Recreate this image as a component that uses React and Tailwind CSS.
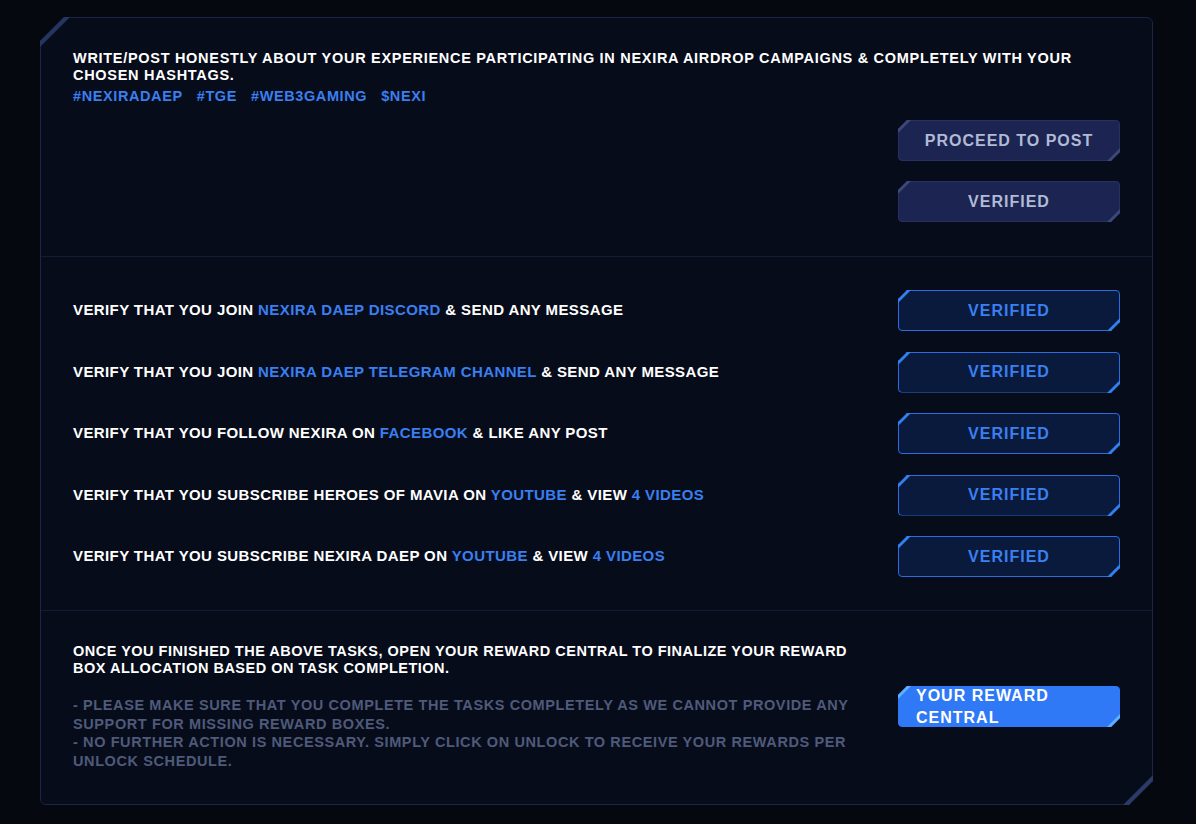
import clsx from "clsx";

const tasks = [
  { before: "Verify that you join ", link: "Nexira DAEP Discord", after: " & send any message" },
  { before: "Verify that you join ", link: "Nexira DAEP Telegram Channel", after: " & send any message" },
  { before: "Verify that you follow Nexira on ", link: "Facebook", after: " & like any post" },
  { before: "Verify that you subscribe Heroes of Mavia on ", link: "Youtube", after: " & view ", extra: "4 videos" },
  { before: "Verify that you subscribe Nexira DAEP on ", link: "Youtube", after: " & view ", extra: "4 videos" }
];

const hashtags = ["#NexiraDAEP", "#TGE", "#Web3Gaming", "$NEXI"];

const variants = {
  muted: {
    box: "bg-[#1c2451] border-[#283262] text-[#b1bad6] justify-center",
    corner: "#3c4878"
  },
  verified: {
    box: "bg-[#0a1a3c] border-[#2d6be0] text-[#3a80f2] justify-center",
    corner: "#3180f0"
  },
  primary: {
    box: "bg-[#2f78f6] border-[#2f78f6] text-white justify-start pl-[17px] pr-[20px] leading-[22px] text-left",
    corner: "#5cb0ff"
  }
};

// chamfered button with bright diagonal strokes on two corners
const TaskButton = ({ variant = "verified", children }) => {
  const v = variants[variant];
  return (
    <div className="relative h-[41px] w-[222px] shrink-0">
      <div
        className={clsx(
          "flex h-full w-full items-center rounded-[4px] border text-[16px] font-bold uppercase tracking-[1px] [clip-path:polygon(9px_0,100%_0,100%_calc(100%-9px),calc(100%-9px)_100%,0_100%,0_9px)]",
          v.box
        )}
      >
        {children}
      </div>
      <svg className="pointer-events-none absolute left-0 top-0" width="14" height="14" viewBox="0 0 14 14">
        <polygon points="0,9 9,0 13,0 0,13" fill={v.corner} />
      </svg>
      <svg className="pointer-events-none absolute bottom-0 right-0" width="14" height="14" viewBox="0 0 14 14">
        <polygon points="14,5 5,14 1,14 14,1" fill={v.corner} />
      </svg>
    </div>
  );
};

export default function App() {
  return (
    <div className="min-h-screen bg-[#05080f] pt-[17px] font-['Liberation_Sans',Arial,sans-serif]">
      <div className="relative ml-[40px] w-[1113px]">
        <div className="rounded-[6px] border border-[#1a2548] bg-[#070c1a] [clip-path:polygon(24px_0,100%_0,100%_calc(100%-24px),calc(100%-24px)_100%,0_100%,0_24px)]">
          {/* post about the campaign */}
          <div className="px-[32px] pb-[34px] pt-[32px]">
            <p className="text-[14.5px] font-bold uppercase leading-[17px] tracking-[0.7px] text-white">
              Write/Post honestly about your experience participating in Nexira airdrop campaigns & completely with your
              <br />
              chosen hashtags.
            </p>
            <div className="mt-[4px] flex gap-[14px] text-[14.5px] font-bold uppercase leading-[17px] tracking-[0.6px] text-[#3a7ff0]">
              {hashtags.map((tag) => (
                <span key={tag}>{tag}</span>
              ))}
            </div>
            <div className="mt-[15px] flex flex-col items-end gap-[20px]">
              <TaskButton variant="muted">Proceed to post</TaskButton>
              <TaskButton variant="muted">Verified</TaskButton>
            </div>
          </div>

          {/* social tasks */}
          <div className="flex flex-col gap-[20.5px] border-t border-[#131b35] px-[32px] py-[33px]">
            {tasks.map((t, i) => (
              <div key={i} className="flex items-center justify-between">
                <p className="text-[15px] font-bold uppercase tracking-[0.4px] text-white">
                  {t.before}
                  <span className="text-[#3a7ff0]">{t.link}</span>
                  {t.after}
                  {t.extra && <span className="text-[#3a7ff0]">{t.extra}</span>}
                </p>
                <TaskButton>Verified</TaskButton>
              </div>
            ))}
          </div>

          {/* reward central */}
          <div className="flex items-center justify-between gap-[30px] border-t border-[#131b35] px-[32px] pb-[34px] pt-[32px]">
            <div className="flex-1">
              <p className="text-[14.5px] font-bold uppercase leading-[17px] tracking-[0.5px] text-white">
                Once you finished the above tasks, open your Reward Central to finalize your reward
                <br />
                box allocation based on task completion.
              </p>
              <p className="mt-[19px] text-[14.5px] font-bold uppercase leading-[18.5px] tracking-[0.6px] text-[#4f5a7a]">
                - Please make sure that you complete the tasks completely as we cannot provide any
                <br />
                support for missing reward boxes.
                <br />
                - No further action is necessary. Simply click on unlock to receive your rewards per
                <br />
                unlock schedule.
              </p>
            </div>
            <TaskButton variant="primary">Your Reward Central</TaskButton>
          </div>
        </div>

        <svg className="pointer-events-none absolute left-0 top-0" width="30" height="30" viewBox="0 0 30 30">
          <polygon points="0,24 24,0 30,0 0,30" fill="#24355f" />
        </svg>
        <svg className="pointer-events-none absolute bottom-0 right-0" width="30" height="30" viewBox="0 0 30 30">
          <polygon points="30,6 6,30 0,30 30,0" fill="#2a3b68" />
        </svg>
      </div>
    </div>
  );
}
